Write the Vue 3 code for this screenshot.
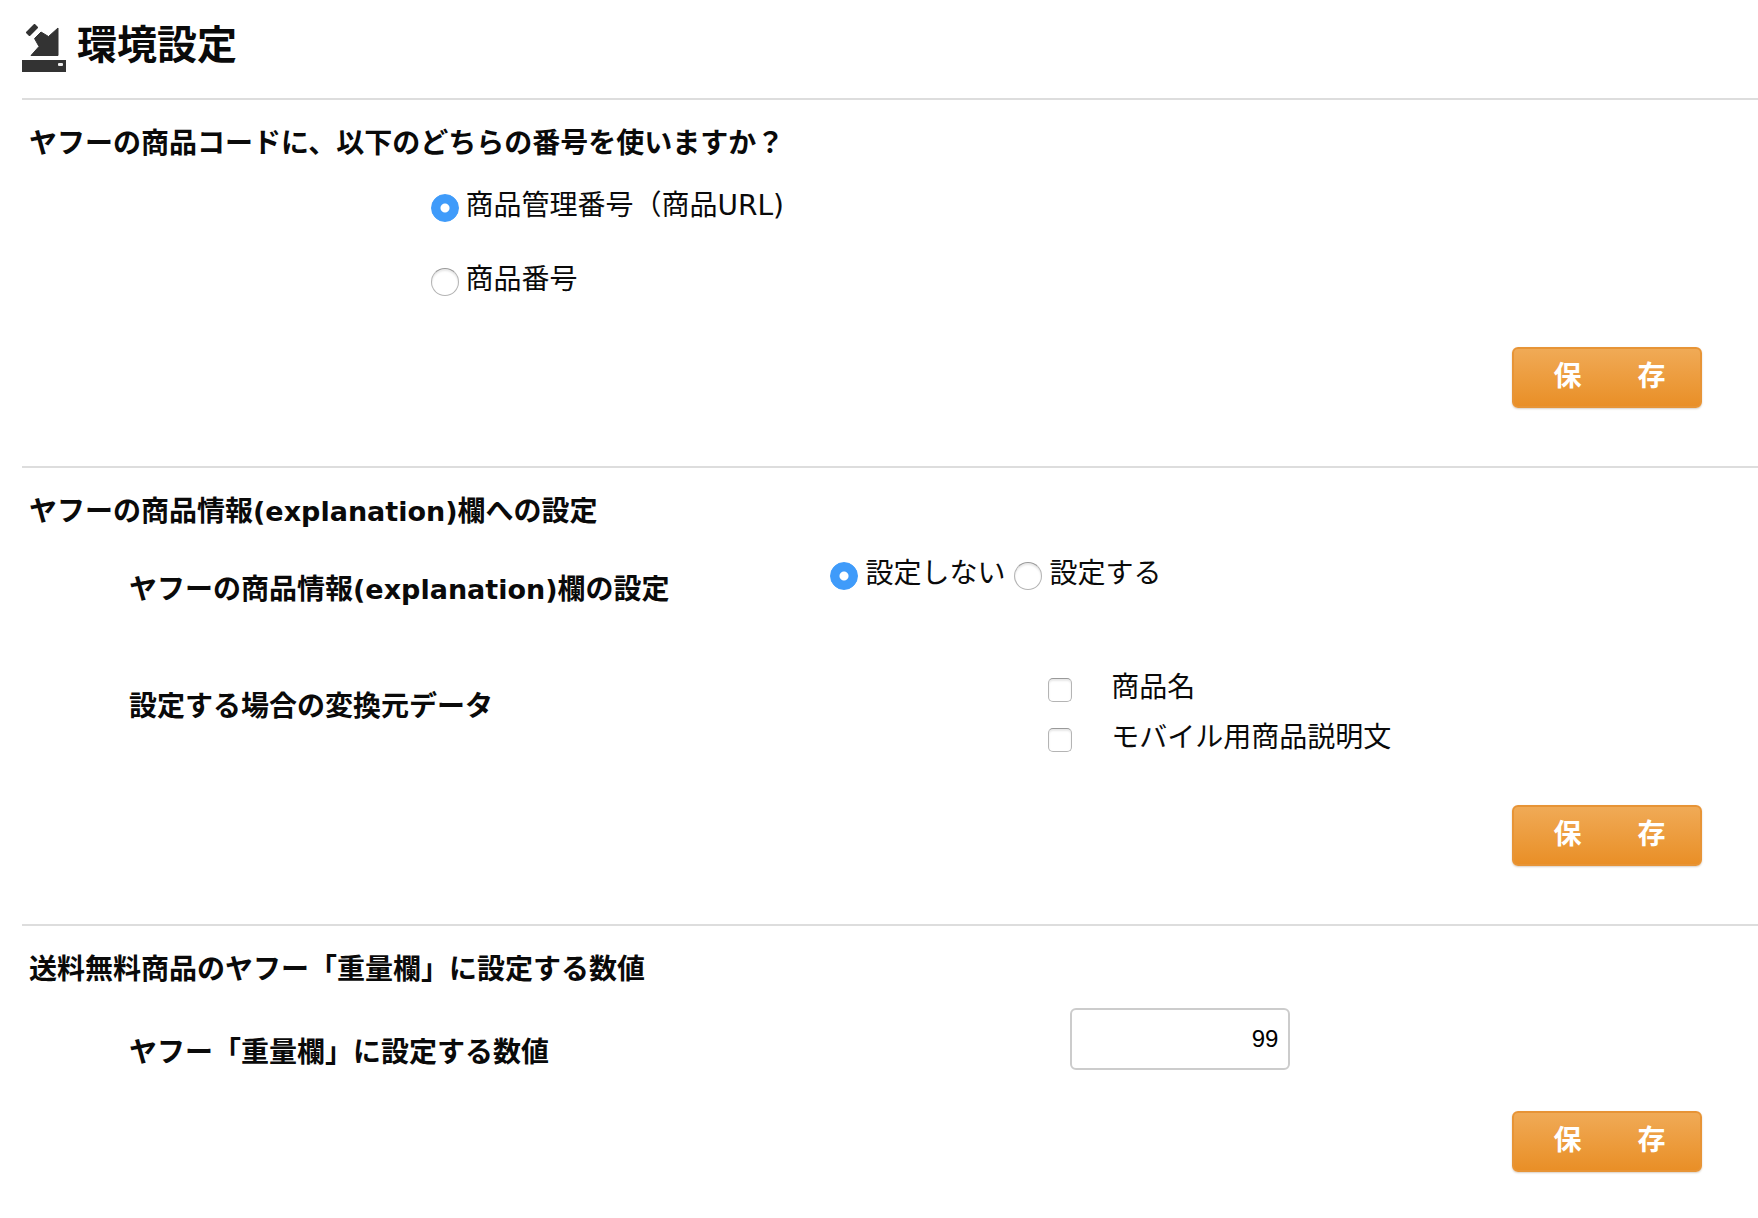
<script setup>
import { ref } from 'vue'

const codeSource = ref('url')
const explanation = ref('off')
const sources = ref([])
const weight = ref('99')

const codeOptions = [
  { value: 'url', label: '商品管理番号（商品URL)' },
  { value: 'number', label: '商品番号' }
]
const explanationOptions = [
  { value: 'off', label: '設定しない' },
  { value: 'on', label: '設定する' }
]
const sourceOptions = [
  { value: 'name', label: '商品名' },
  { value: 'mobile', label: 'モバイル用商品説明文' }
]
</script>

<template>
  <main class="page">
    <header class="title">
      <svg class="title-icon" viewBox="0 0 44 48" aria-hidden="true">
        <g fill="#333" stroke="#333" stroke-linejoin="round">
          <path stroke="none" d="M0 36h44v12H0z" />
          <path stroke-width="2" d="M5 8.500 12.500 1 15 3.500 7.500 11z" />
          <path stroke-width="1" d="M12.500 14.500 19 8 26.500 12.500 36 4V31.500H9L17 22.500z" />
        </g>
        <rect x="36" y="39" width="5" height="3" rx="1" fill="#eee" />
      </svg>
      <h1>環境設定</h1>
    </header>

    <form class="section" @submit.prevent>
      <h2>ヤフーの商品コードに、以下のどちらの番号を使いますか？</h2>
      <div class="code-options">
        <label v-for="o in codeOptions" :key="o.value" class="choice">
          <input v-model="codeSource" type="radio" name="code" :value="o.value" />
          <span>{{ o.label }}</span>
        </label>
      </div>
      <div class="actions"><button type="submit">保　　存</button></div>
    </form>

    <form class="section" @submit.prevent>
      <h2>ヤフーの商品情報<span class="latin">(explanation)</span>欄への設定</h2>
      <div class="row row-explanation">
        <h3 id="explanation-label">ヤフーの商品情報<span class="latin">(explanation)</span>欄の設定</h3>
        <div class="inline-options" role="radiogroup" aria-labelledby="explanation-label">
          <label v-for="o in explanationOptions" :key="o.value" class="choice">
            <input v-model="explanation" type="radio" name="explanation" :value="o.value" />
            <span>{{ o.label }}</span>
          </label>
        </div>
      </div>
      <div class="row row-source">
        <h3 id="source-label">設定する場合の変換元データ</h3>
        <div class="check-options" role="group" aria-labelledby="source-label">
          <label v-for="o in sourceOptions" :key="o.value" class="check">
            <input v-model="sources" type="checkbox" :value="o.value" />
            <span>{{ o.label }}</span>
          </label>
        </div>
      </div>
      <div class="actions"><button type="submit">保　　存</button></div>
    </form>

    <form class="section" @submit.prevent>
      <h2>送料無料商品のヤフー「重量欄」に設定する数値</h2>
      <div class="row row-weight">
        <h3><label for="weight">ヤフー「重量欄」に設定する数値</label></h3>
        <div class="weight-field">
          <input id="weight" v-model="weight" class="weight" type="text" inputmode="numeric" />
        </div>
      </div>
      <div class="actions"><button type="submit">保　　存</button></div>
    </form>
  </main>
</template>

<style>
body {
  margin: 0;
  background: #fff;
}
</style>

<style scoped>
.page {
  padding: 20px 0 40px 22px;
  color: #0a0a0a;
  font-family: "DejaVu Sans", "Noto Sans CJK JP", sans-serif;
  font-size: 28px;
  line-height: 40px;
}

h1,
h2,
h3 {
  margin: 0;
  font-size: 28px;
  font-weight: 700;
  line-height: 40px;
}

.latin {
  font-size: 27px;
}

.title {
  display: flex;
  gap: 11px;
  padding-bottom: 26px;
}

.title-icon {
  width: 44px;
  height: 48px;
  margin-top: 4px;
}

.title h1 {
  font-size: 40px;
  line-height: 50px;
  height: 48px;
}

.section {
  padding: 24px 56px 58px 7px;
  border-top: 2px solid #ddd;
}

.section:last-child {
  padding-bottom: 0;
}

.code-options {
  display: flex;
  flex-direction: column;
  align-items: flex-start;
  gap: 34px;
  margin-top: 22px;
  padding-left: 24%;
}

.choice {
  display: flex;
  align-items: center;
  gap: 7px;
}

input {
  box-sizing: border-box;
  margin: 0;
}

input[type="radio"],
input[type="checkbox"] {
  flex: none;
  appearance: none;
  border: 1px solid #b4b4b4;
  border-top-color: #999;
  background: #fff;
  box-shadow: inset 0 2px 2px #e8e8e8;
}

input[type="radio"] {
  width: 28px;
  height: 28px;
  margin-top: 3px;
  border-radius: 50%;
}

input[type="radio"]:checked {
  border-color: #3f9bfa;
  background: radial-gradient(circle, #fff 0 4px, #3f9bfa 5px);
  box-shadow: none;
}

input[type="checkbox"] {
  width: 24px;
  height: 24px;
  margin-top: 4px;
  border-radius: 5px;
}

.row {
  display: grid;
  grid-template-columns: 48% 1fr;
  align-items: start;
  margin-left: -3px;
}

.row h3 {
  padding-left: 103px;
}

.row-explanation {
  margin-top: 22px;
}

.row-explanation h3 {
  margin-top: 16px;
}

.row-source {
  margin-top: 58px;
}

.row-source h3 {
  margin-top: 19px;
}

.row-weight {
  margin-top: 18px;
}

.row-weight h3 {
  margin-top: 25px;
}

.inline-options {
  display: flex;
  gap: 9px;
}

.check-options {
  display: flex;
  flex-direction: column;
  gap: 10px;
  padding-left: 25%;
}

.check {
  display: flex;
  align-items: center;
  gap: 39px;
}

.weight-field {
  padding-left: 240px;
}

.weight {
  display: block;
  width: 220px;
  height: 62px;
  padding: 0 10px;
  border: 2px solid #ccc;
  border-radius: 6px;
  background: #fff;
  color: #000;
  font-family: "Liberation Sans", sans-serif;
  font-size: 24px;
  text-align: right;
}

.actions {
  display: flex;
  justify-content: flex-end;
  margin-top: 47px;
}

.row-weight + .actions {
  margin-top: 38px;
}

button {
  width: 190px;
  height: 61px;
  padding: 0 0 8px 5px;
  border: 2px solid #e79436;
  border-radius: 6px;
  background: linear-gradient(#f0aa56, #e98f27);
  box-shadow: 0 1px 2px #d8cfc4;
  color: #fff;
  font-family: "Noto Sans CJK JP", sans-serif;
  font-size: 28px;
  font-weight: 700;
  line-height: 40px;
  white-space: nowrap;
}
</style>
